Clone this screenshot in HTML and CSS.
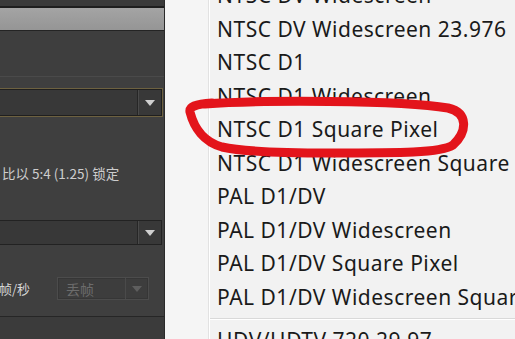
FILE: index.html
```html
<!DOCTYPE html>
<html lang="zh">
<head>
<meta charset="utf-8">
<title>Composition Settings</title>
<link rel="stylesheet" href="styles.css">
</head>
<body>
<div class="screen">
  <div class="panel">
    <div class="strip"></div>
    <div class="rule-dark2"></div>
    <div class="titlebar"></div>
    <div class="rule-dark"></div>
    <div class="block"></div>
    <div class="rule-light"></div>
    <div class="dropdown focus">
      <div class="dd-field"></div>
      <div class="dd-btn"><span class="tri"></span></div>
    </div>
    <div class="note">比以 5:4 (1.25) 锁定</div>
    <div class="dropdown plain">
      <div class="dd-field"></div>
      <div class="dd-btn"><span class="tri"></span></div>
    </div>
    <div class="fps-row">
      <span class="fps-label">帧/秒</span>
      <div class="dropdown disabled">
        <div class="dd-field"><span class="dd-text">丢帧</span></div>
        <div class="dd-btn"><span class="tri"></span></div>
      </div>
    </div>
    <div class="rule-bottom"></div>
    <div class="footer"></div>
  </div>
  <div class="menu">
    <div class="gutter"></div>
    <ul class="items">
      <li>NTSC DV Widescreen</li>
      <li>NTSC DV Widescreen 23.976</li>
      <li>NTSC D1</li>
      <li>NTSC D1 Widescreen</li>
      <li>NTSC D1 Square Pixel</li>
      <li>NTSC D1 Widescreen Square Pixel</li>
      <li>PAL D1/DV</li>
      <li>PAL D1/DV Widescreen</li>
      <li>PAL D1/DV Square Pixel</li>
      <li>PAL D1/DV Widescreen Square Pixel</li>
      <li class="sep"></li>
      <li>HDV/HDTV 720 29.97</li>
    </ul>
  </div>
  <svg class="mark" width="515" height="339" viewBox="0 0 515 339">
    <path d="M205 104 C260 100 400 100 448 108 C469 113 467 132 453 145 C441 153 400 153 330 153 C280 153 240 151 222 147 C204 142 194 128 190 112 C189 107 195 104 212 103"/>
  </svg>
</div>
</body>
</html>
```

FILE: styles.css
```css
* { box-sizing: border-box; }
html, body { margin: 0; padding: 0; }
body { width: 515px; height: 339px; overflow: hidden; background: #f2f2f2; }

.screen {
  position: relative;
  width: 515px;
  height: 339px;
  display: flex;
  overflow: hidden;
}

/* ---------- dark After Effects panel ---------- */
.panel {
  width: 165px;
  flex: none;
  height: 339px;
  background: #3f3f3f;
  border-right: 1px solid #2a2a2a;
  display: flex;
  flex-direction: column;
  font-family: "Noto Sans CJK SC", "Noto Sans", sans-serif;
  overflow: hidden;
}
.strip { height: 6px; background: #3a3a3a; }
.rule-dark2 { height: 2px; background: #1e1e1e; }
.titlebar { height: 22px; background: linear-gradient(#a4a4a4, #959595); }
.rule-dark { height: 1px; background: #242424; }
.block { height: 45px; background: #3e3e3e; }
.rule-light { height: 1px; background: #4a4a4a; margin-bottom: 11px; }

.dropdown {
  display: flex;
  align-items: stretch;
  background: #383838;
}
.dropdown.focus {
  height: 29px;
  width: 167px;
  margin-left: -4px;
  border: 1px solid #6d6140;
  box-shadow: inset 0 0 0 1px #1f1f1f;
  padding: 1px;
}
.dropdown.plain {
  height: 25px;
  width: 166px;
  margin-left: -4px;
  margin-top: 39px;
  border: 1px solid #222;
}
.dd-field { flex: 1; display: flex; align-items: center; }
.dd-btn {
  width: 24px;
  border-left: 1px solid #262626;
  box-shadow: inset 1px 0 0 #4a4a4a;
  display: flex;
  align-items: center;
  justify-content: center;
}
.tri {
  width: 0; height: 0;
  border-left: 5px solid transparent;
  border-right: 5px solid transparent;
  border-top: 6px solid #cfcfcf;
}

.note {
  height: 16px;
  margin-top: 48px;
  padding-left: 2px;
  font-size: 13.5px;
  line-height: 16px;
  color: #cdcdcd;
  white-space: nowrap;
}

.fps-row {
  height: 23px;
  margin-top: 32px;
  display: flex;
  align-items: center;
}
.fps-label {
  width: 58px;
  font-size: 13px;
  color: #d6d6d6;
  white-space: nowrap;
  margin-left: -1px;
}
.dropdown.disabled {
  width: 92px;
  height: 23px;
  background: #3d3d3d;
  border: 1px solid #4c4c4c;
  box-shadow: inset 0 0 0 1px #363636;
}
.dropdown.disabled .dd-field { padding-left: 8px; }
.dd-text { font-size: 14px; color: #6c6c6c; }
.dropdown.disabled .dd-btn {
  width: 23px;
  border-left: 1px solid #4a4a4a;
  box-shadow: none;
}
.dropdown.disabled .tri { border-top-color: #5e5e5e; }

.rule-bottom { height: 1px; background: #262626; margin-top: 16px; }
.footer { flex: 1; background: #3b3b3b; }

/* ---------- Windows-style popup menu ---------- */
.menu {
  flex: 1;
  display: flex;
  background: #f2f2f2;
  overflow: hidden;
}
.gutter {
  width: 44px;
  flex: none;
  background: #f5f5f5;
  border-right: 1px solid #e2e2e2;
}
.items {
  list-style: none;
  margin: -21px 0 0 0;
  padding: 0 0 0 7px;
  border-left: 1px solid #ffffff;
  font-family: "Noto Sans", "Open Sans", sans-serif;
  font-size: 21px;
  letter-spacing: 0.5px;
  color: #1a1a1a;
  white-space: nowrap;
}
.items li {
  height: 33.5px;
  line-height: 33.5px;
}
.items li.sep {
  height: 2px;
  margin: 4px 0 4px -7px;
  border-top: 1px solid #d9d9d9;
  border-bottom: 1px solid #ffffff;
}

/* ---------- red annotation ---------- */
.mark {
  position: absolute;
  left: 0;
  top: 0;
  pointer-events: none;
}
.mark path {
  fill: none;
  stroke: #e3141b;
  stroke-width: 9;
  stroke-linecap: round;
  stroke-linejoin: round;
}
```
